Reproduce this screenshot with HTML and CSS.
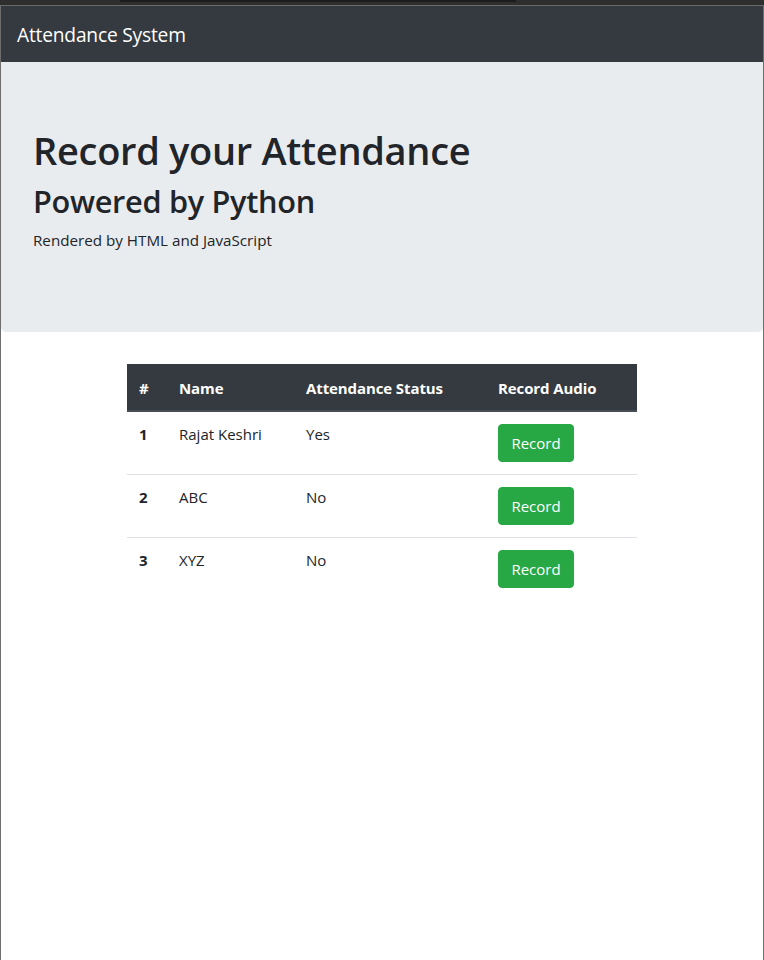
FILE: index.html
```html
<!DOCTYPE html>
<html lang="en">
<head>
<meta charset="utf-8">
<title>Attendance System</title>
<link rel="stylesheet" href="styles.css">
</head>
<body>
<div class="frame">
  <div class="chrome"><div class="chrome-tab"></div></div>
  <nav class="navbar"><span class="brand">Attendance System</span></nav>
  <header class="jumbotron">
    <h1>Record your Attendance</h1>
    <h2>Powered by Python</h2>
    <p>Rendered by HTML and JavaScript</p>
  </header>
  <table class="table">
    <thead>
      <tr><th class="c-num">#</th><th class="c-name">Name</th><th class="c-status">Attendance Status</th><th class="c-rec">Record Audio</th></tr>
    </thead>
    <tbody>
      <tr><th>1</th><td>Rajat Keshri</td><td>Yes</td><td><button class="btn">Record</button></td></tr>
      <tr><th>2</th><td>ABC</td><td>No</td><td><button class="btn">Record</button></td></tr>
      <tr><th>3</th><td>XYZ</td><td>No</td><td><button class="btn">Record</button></td></tr>
    </tbody>
  </table>
</div>
</body>
</html>
```
FILE: styles.css
```css
* { box-sizing: border-box; }
html, body { margin: 0; padding: 0; background: #fff; }
body {
  font-family: "Open Sans", "Noto Sans", sans-serif;
  font-size: 15px;
  line-height: 1.6;
  color: #212529;
}
.frame {
  min-height: 960px;
  border-left: 1px solid #6e6e6e;
  border-right: 1px solid #6e6e6e;
}
.chrome {
  height: 6px;
  background: #2e2e2e;
  border-bottom: 1px solid #6a6a6a;
  margin: 0 -1px;
}
.chrome-tab {
  margin-left: 120px;
  width: 396px;
  height: 2px;
  background: #1c1c1c;
}
.navbar {
  height: 56px;
  background: #343a40;
  display: flex;
  align-items: center;
  padding: 0 16px;
}
.brand {
  color: #fff;
  font-size: 19.2px;
  line-height: 30px;
  letter-spacing: -0.2px;
  padding-top: 2px;
}
.jumbotron {
  background: #e9ecef;
  padding: 64px 32px;
  border-radius: 0 0 4.8px 4.8px;
  margin-bottom: 32px;
}
.jumbotron h1 {
  margin: 0 0 8px;
  font-size: 38px;
  font-weight: 600;
  line-height: 48px;
  letter-spacing: -0.3px;
}
.jumbotron h2 {
  margin: 0 0 8px;
  font-size: 30.7px;
  font-weight: 600;
  line-height: 38px;
  letter-spacing: -0.3px;
}
.jumbotron p {
  margin: 0 0 16px;
  font-size: 15.2px;
  line-height: 24px;
}
.table {
  width: 510px;
  margin: 0 auto;
  border-collapse: collapse;
}
.table th, .table td {
  padding: 12px;
  text-align: left;
  vertical-align: top;
  line-height: 24px;
  font-size: 15px;
}
.table thead th {
  padding: 12px 12px 10px;
  background: #343a40;
  color: #fff;
  font-weight: 700;
  border-bottom: 2px solid #454d55;
  vertical-align: bottom;
  letter-spacing: -0.1px;
}
.table tbody td { padding-top: 10px; }
.table tbody tr + tr th, .table tbody tr + tr td { border-top: 1px solid #dee2e6; }
.table tbody th { font-weight: 700; padding-top: 10px; }
.table tbody td.btn-cell, .table tbody td:last-child { padding-top: 12px; }
.c-num { width: 40px; }
.c-name { width: 127px; }
.c-status { width: 192px; }
.btn {
  font-family: inherit;
  font-size: 15px;
  line-height: 24px;
  padding: 6px 12px;
  border: 1px solid #28a745;
  background: #28a745;
  color: #fff;
  border-radius: 4px;
  width: 76px;
  cursor: pointer;
}
```
